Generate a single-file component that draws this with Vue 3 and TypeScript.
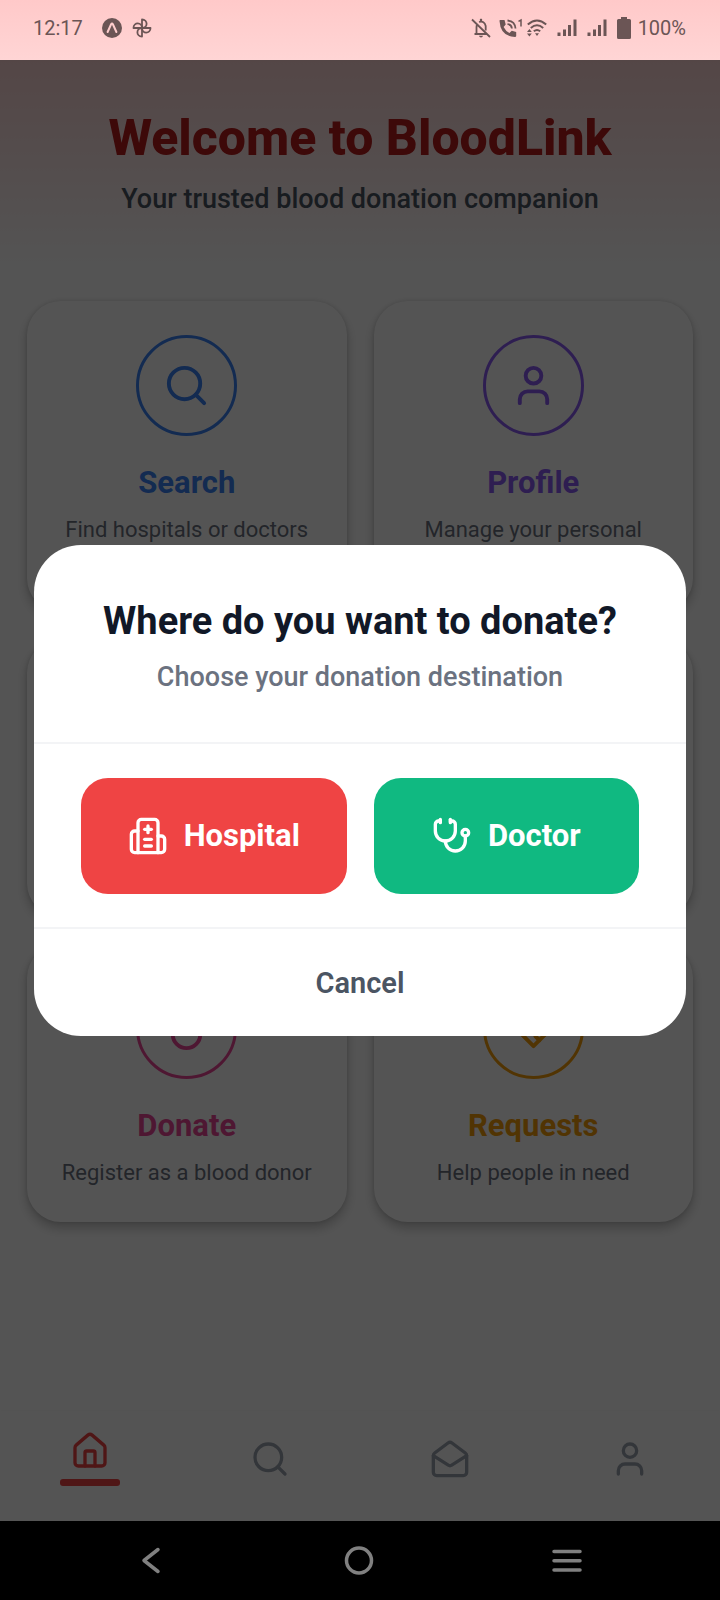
<script setup lang="ts">
import { ref } from 'vue'

interface Action {
  id: string
  title: string
  text: string
  color: string
  paths: string[]
}

const searchPaths = ['M19 11a8 8 0 1 1-16 0a8 8 0 1 1 16 0', 'm21 21-4.3-4.3']
const userPaths = ['M19 21v-2a4 4 0 0 0-4-4H9a4 4 0 0 0-4 4v2', 'M16 7a4 4 0 1 1-8 0a4 4 0 1 1 8 0']

const topActions: Action[] = [
  { id: 'search', title: 'Search', text: 'Find hospitals or doctors', color: '#3b82f6', paths: searchPaths },
  { id: 'profile', title: 'Profile', text: 'Manage your personal', color: '#8b5cf6', paths: userPaths },
]

const bottomActions: Action[] = [
  {
    id: 'donate',
    title: 'Donate',
    text: 'Register as a blood donor',
    color: '#ec4899',
    paths: ['M12 22a7 7 0 0 0 7-7c0-2-1-3.9-3-5.5s-3.5-4-4-6.5c-.5 2.5-2 4.9-4 6.5C6 11.1 5 13 5 15a7 7 0 0 0 7 7z'],
  },
  {
    id: 'requests',
    title: 'Requests',
    text: 'Help people in need',
    color: '#f59e0b',
    paths: [
      'M19 14c1.49-1.46 3-3.21 3-5.5A5.5 5.5 0 0 0 16.5 3c-1.76 0-3 .5-4.5 2-1.5-1.5-2.74-2-4.5-2A5.5 5.5 0 0 0 2 8.5c0 2.3 1.5 4.05 3 5.5l7 7Z',
      'M12 5 9.04 7.96a2.17 2.17 0 0 0 0 3.08c.82.82 2.13.85 3 .07l2.07-1.9a2.82 2.82 0 0 1 3.79 0l2.96 2.66',
      'm18 15-2-2',
      'm15 18-2-2',
    ],
  },
]

const tabs = [
  {
    id: 'home',
    paths: [
      'M15 21v-8a1 1 0 0 0-1-1h-4a1 1 0 0 0-1 1v8',
      'M3 10a2 2 0 0 1 .709-1.528l7-5.999a2 2 0 0 1 2.582 0l7 5.999A2 2 0 0 1 21 10v9a2 2 0 0 1-2 2H5a2 2 0 0 1-2-2z',
    ],
  },
  { id: 'search', paths: searchPaths },
  {
    id: 'messages',
    paths: [
      'M21.2 8.4c.5.38.8.97.8 1.6v10a2 2 0 0 1-2 2H4a2 2 0 0 1-2-2V10a2 2 0 0 1 .8-1.6l8-6a2 2 0 0 1 2.4 0l8 6Z',
      'm22 10-8.97 5.7a1.94 1.94 0 0 1-2.06 0L2 10',
    ],
  },
  { id: 'account', paths: userPaths },
]

const hospitalPaths = [
  'M12 6v4', 'M14 14h-4', 'M14 18h-4', 'M14 8h-4',
  'M18 12h2a2 2 0 0 1 2 2v6a2 2 0 0 1-2 2H4a2 2 0 0 1-2-2v-9a2 2 0 0 1 2-2h2',
  'M18 22V4a2 2 0 0 0-2-2H8a2 2 0 0 0-2 2v18',
]
const doctorPaths = [
  'M11 2v2', 'M5 2v2',
  'M5 3H4a2 2 0 0 0-2 2v4a6 6 0 0 0 12 0V5a2 2 0 0 0-2-2h-1',
  'M8 15a6 6 0 0 0 12 0v-3',
  'M22 10a2 2 0 1 1-4 0a2 2 0 1 1 4 0',
]

const activeTab = ref('home')
const dialogOpen = ref(true)
</script>

<template>
  <div class="screen">
    <header class="status">
      <span class="clock">12:17</span>
      <svg class="s20" viewBox="0 0 20 20" aria-hidden="true">
        <circle cx="10" cy="10" r="10" fill="currentColor" />
        <path d="M5.6 14 9.1 6.3q.9-1.4 1.8 0L14.4 14" fill="none" stroke="#fecdcd" stroke-width="2" stroke-linecap="round" />
      </svg>
      <svg class="s20 fan" viewBox="0 0 20 20" fill="none" stroke="currentColor" stroke-width="1.8" stroke-linejoin="round" aria-hidden="true">
        <path d="M10 10V1.5C13 1.5 14.6 3.6 14.6 5.8S12.6 10 10 10Z" />
        <path d="M10 10h8.5C18.5 13 16.4 14.6 14.2 14.6S10 12.6 10 10Z" />
        <path d="M10 10v8.5C7 18.5 5.4 16.4 5.4 14.2S7.4 10 10 10Z" />
        <path d="M10 10H1.5C1.5 7 3.6 5.4 5.8 5.4S10 7.4 10 10Z" />
      </svg>
      <span class="spacer"></span>
      <svg class="s20" viewBox="0 0 20 20" fill="none" stroke="currentColor" stroke-width="1.8" aria-hidden="true">
        <path d="M1 1.5 19 19M3.500 16h12M5.500 16V9q0-1.500.8-2.800M8 4q5.500-1.500 6.700 4v4.500" />
        <path d="M10 .8v2.500" stroke-width="2.2" />
        <path d="M8 17.800h4q-.4 1.600-2 1.600t-2-1.600z" fill="currentColor" stroke="none" />
      </svg>
      <svg class="phone" viewBox="0 0 24 20" aria-hidden="true">
        <path d="M1 2h4.500l1.200 4.500L4.600 9q2 4 5.800 6l2.400-2.200 4.400 1.200V18q-.2 1-1.200 1Q1.500 18.500.5 3q0-1 .5-1z" fill="currentColor" />
        <path d="M8.500 2.500q7.500.5 8 8M8.500 6.200q4 .3 4.400 4.300" fill="none" stroke="currentColor" stroke-width="1.8" />
        <path d="M19.500 3.300 22 2v6.500" fill="none" stroke="currentColor" stroke-width="1.5" />
      </svg>
      <svg class="s20 wifi" viewBox="0 0 20 20" aria-hidden="true">
        <path d="M.8 6.500q9.200-8 18.400 0M3.800 10q6.200-5.400 12.400 0M6.800 13.300q3.200-2.600 6.400 0" fill="none" stroke="currentColor" stroke-width="2" />
        <path d="M8 15.300h4l-2 2.700zM0 14l2.400-3 2.400 3zM0 15.500h4.800l-2.400 3z" fill="currentColor" />
      </svg>
      <svg v-for="n in 2" :key="n" class="s20 signal" viewBox="0 0 20 20" fill="currentColor" aria-hidden="true">
        <path d="M.5 14.500h3V18H.5zM6 11.500h3V18H6zM11 7h3v11h-3zM16.500 1.500h3V18h-3z" />
      </svg>
      <svg class="battery" viewBox="0 0 14 22" fill="currentColor" aria-hidden="true">
        <path d="M4 0h6v2h2.500Q14 2 14 3.500v17q0 1.500-1.500 1.500h-11Q0 22 0 20.500v-17Q0 2 1.500 2H4z" />
      </svg>
      <span class="percent">100%</span>
    </header>

    <div class="app">
      <main class="home">
        <div class="welcome">
          <h1>Welcome to BloodLink</h1>
          <p>Your trusted blood donation companion</p>
        </div>
        <div class="grid">
          <button v-for="a in topActions" :key="a.id" type="button" class="card" :style="{ color: a.color }">
            <span class="ring">
              <svg class="icon" viewBox="0 0 24 24" aria-hidden="true"><path v-for="d in a.paths" :key="d" :d="d" /></svg>
            </span>
            <span class="card-title">{{ a.title }}</span>
            <span class="card-text">{{ a.text }}</span>
          </button>
          <div class="card" aria-hidden="true"></div>
          <div class="card" aria-hidden="true"></div>
          <button v-for="a in bottomActions" :key="a.id" type="button" class="card" :style="{ color: a.color }">
            <span class="ring">
              <svg class="icon" viewBox="0 0 24 24" aria-hidden="true"><path v-for="d in a.paths" :key="d" :d="d" /></svg>
            </span>
            <span class="card-title">{{ a.title }}</span>
            <span class="card-text">{{ a.text }}</span>
          </button>
        </div>
      </main>

      <nav class="tabs">
        <button v-for="t in tabs" :key="t.id" type="button" class="tab" :class="{ active: activeTab === t.id }" :aria-label="t.id" @click="activeTab = t.id">
          <svg class="icon small" viewBox="0 0 24 24" aria-hidden="true"><path v-for="d in t.paths" :key="d" :d="d" /></svg>
          <span v-if="activeTab === t.id" class="marker"></span>
        </button>
      </nav>

      <div v-if="dialogOpen" class="overlay">
        <section class="dialog" role="dialog" aria-modal="true" aria-labelledby="dialog-title">
          <div class="dialog-head">
            <h2 id="dialog-title">Where do you want to donate?</h2>
            <p>Choose your donation destination</p>
          </div>
          <div class="choices">
            <button type="button" class="choice hospital">
              <svg class="icon small" viewBox="0 0 24 24" aria-hidden="true"><path v-for="d in hospitalPaths" :key="d" :d="d" /></svg>
              <span>Hospital</span>
            </button>
            <button type="button" class="choice doctor">
              <svg class="icon small" viewBox="0 0 24 24" aria-hidden="true"><path v-for="d in doctorPaths" :key="d" :d="d" /></svg>
              <span>Doctor</span>
            </button>
          </div>
          <button type="button" class="cancel" @click="dialogOpen = false">Cancel</button>
        </section>
      </div>
    </div>

    <footer class="system">
      <button type="button" aria-label="Back">
        <svg viewBox="0 0 32 32"><path d="M23 4.500 9 15.500l14 11" /></svg>
      </button>
      <button type="button" aria-label="Home">
        <svg viewBox="0 0 32 32"><circle cx="16" cy="15.500" r="12.500" /></svg>
      </button>
      <button type="button" aria-label="Menu">
        <svg viewBox="0 0 32 32"><path d="M3 6.500h26M3 15.800h26M3 25h26" /></svg>
      </button>
    </footer>
  </div>
</template>

<style>
body {
  margin: 0;
}
</style>

<style scoped>
.screen {
  display: flex;
  flex-direction: column;
  min-height: 100vh;
  font-family: Roboto, "Liberation Sans", sans-serif;
  background: #fff linear-gradient(#ffc9c9, #fff) top / 100% 272px no-repeat;
}

button {
  margin: 0;
  padding: 0;
  border: 0;
  background: none;
  font-family: inherit;
  cursor: pointer;
}

h1,
h2,
p {
  margin: 0;
}

.status {
  display: flex;
  align-items: center;
  box-sizing: border-box;
  height: 60px;
  padding: 0 34px 5px 33px;
  color: #6b5555;
  font-size: 20px;
  line-height: 24px;
}

.s20 {
  width: 20px;
  height: 20px;
}

.clock {
  margin-right: 19px;
}

.fan {
  margin-left: 10px;
}

.spacer {
  flex: 1;
}

.phone {
  width: 24px;
  height: 20px;
  margin-left: 8px;
}

.wifi {
  margin-left: 4px;
}

.signal {
  margin-left: 10px;
}

.battery {
  width: 14px;
  height: 22px;
  margin: 0 7px 0 10px;
}

.app {
  position: relative;
  display: flex;
  flex: 1;
  flex-direction: column;
}

.home {
  flex: 1;
  padding: 48px 27px 27px;
}

.welcome {
  margin-bottom: 84px;
  text-align: center;
}

h1 {
  color: #b91c1c;
  font-size: 50px;
  font-weight: 800;
  line-height: 60px;
}

.welcome p {
  margin-top: 13px;
  color: #4b5563;
  font-size: 27px;
  font-weight: 500;
  line-height: 36px;
}

.grid {
  display: grid;
  grid-template-columns: 1fr 1fr;
  grid-template-rows: minmax(311px, auto) minmax(278px, auto) minmax(278px, auto);
  gap: 27px;
}

.card {
  display: flex;
  flex-direction: column;
  align-items: center;
  justify-content: flex-start;
  padding: 34px 12px 32px;
  border-radius: 34px;
  background: #fff;
  box-shadow: 0 6px 12px rgba(0, 0, 0, 0.24), 0 0 4px rgba(0, 0, 0, 0.12);
}

.ring {
  display: flex;
  align-items: center;
  justify-content: center;
  box-sizing: border-box;
  width: 101px;
  height: 101px;
  border: 3px solid;
  border-radius: 50%;
}

.icon {
  width: 47px;
  height: 47px;
  fill: none;
  stroke: currentColor;
  stroke-width: 2;
  stroke-linecap: round;
  stroke-linejoin: round;
}

.icon.small {
  width: 40px;
  height: 40px;
}

.card-title {
  margin-top: 29px;
  font-size: 31px;
  font-weight: 700;
  line-height: 36px;
}

.card-text {
  margin-top: 12px;
  color: #6b7280;
  font-size: 22px;
  line-height: 33px;
}

.tabs {
  display: grid;
  grid-template-columns: repeat(4, 1fr);
  box-sizing: border-box;
  min-height: 110px;
  padding: 20px 0 35px;
  background: #fff;
  box-shadow: 0 0 4px rgba(0, 0, 0, 0.04);
}

.tab {
  display: flex;
  flex-direction: column;
  align-items: center;
  justify-content: center;
  gap: 8px;
  color: #9ca3af;
}

.tab.active {
  color: #ef4444;
}

.marker {
  width: 60px;
  height: 7px;
  border-radius: 3px;
  background: currentColor;
}

.overlay {
  position: absolute;
  inset: 0;
  display: flex;
  align-items: center;
  justify-content: center;
  padding: 0 34px;
  background: rgba(0, 0, 0, 0.67);
}

.dialog {
  flex: 1;
  overflow: hidden;
  border-radius: 47px;
  background: #fff;
}

.dialog-head {
  padding: 54px 34px 47px;
  border-bottom: 2px solid #f3f4f6;
  text-align: center;
}

h2 {
  color: #111827;
  font-size: 38px;
  font-weight: 700;
  line-height: 44px;
}

.dialog-head p {
  margin-top: 16px;
  color: #6b7280;
  font-size: 27px;
  font-weight: 500;
  line-height: 36px;
}

.choices {
  display: grid;
  grid-template-columns: 1fr 1fr;
  gap: 27px;
  padding: 34px 47px 33px;
}

.choice {
  display: flex;
  align-items: center;
  justify-content: center;
  gap: 16px;
  min-height: 116px;
  border-radius: 27px;
  color: #fff;
  font-size: 31px;
  font-weight: 700;
  line-height: 36px;
}

.hospital {
  background: #ef4444;
}

.doctor {
  background: #10b981;
}

.cancel {
  display: block;
  width: 100%;
  padding: 37px 0 35px;
  border-top: 2px solid #f3f4f6;
  color: #4b5563;
  font-size: 29px;
  font-weight: 600;
  line-height: 35px;
}

.system {
  display: grid;
  grid-template-columns: repeat(3, 1fr);
  min-height: 79px;
  padding: 0 49px 0 47px;
  background: #000;
}

.system button {
  display: flex;
  align-items: center;
  justify-content: center;
}

.system svg {
  width: 32px;
  height: 32px;
  fill: none;
  stroke: #808080;
  stroke-width: 3.5;
  stroke-linecap: round;
  stroke-linejoin: round;
}
</style>
